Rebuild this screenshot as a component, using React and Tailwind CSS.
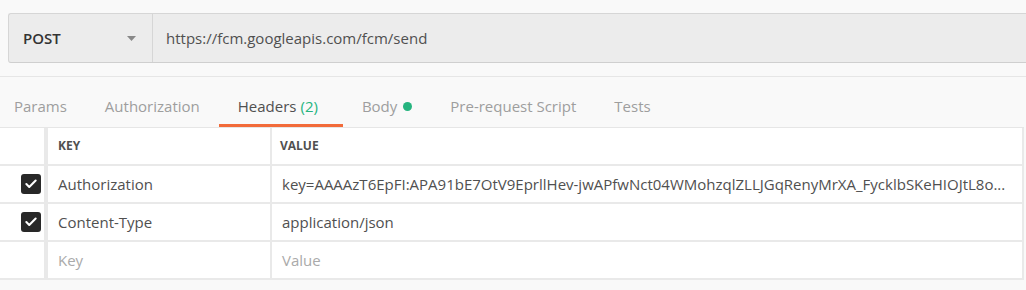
import { Check } from "lucide-react";

const tabs = [
  { label: "Params" },
  { label: "Authorization" },
  { label: "Headers", count: "(2)", active: true },
  { label: "Body", dot: true },
  { label: "Pre-request Script" },
  { label: "Tests" },
];

const rows = [
  {
    key: "Authorization",
    value:
      "key=AAAAzT6EpFI:APA91bE7OtV9EprllHev-jwAPfwNct04WMohzqlZLLJGqRenyMrXA_FycklbSKeHIOJtL8o...",
    checked: true,
  },
  { key: "Content-Type", value: "application/json", checked: true },
];

function Checkbox() {
  return (
    <span className="flex h-5 w-5 items-center justify-center rounded-[3px] bg-[#282828]">
      <Check size={14} strokeWidth={3.5} className="text-white" />
    </span>
  );
}

export default function App() {
  return (
    <div className="h-[290px] w-[1026px] overflow-hidden bg-[#f9f9f9] font-['Open_Sans',sans-serif] text-[15px]">
      <div className="pt-[13px] pl-2">
        <div className="flex h-[50px] w-[1030px] rounded-l-[3px] border border-r-0 border-[#d6d6d6] border-b-[#cfcfcf] bg-[#ececec]">
          <div className="flex w-[144px] items-center justify-between border-r border-[#d6d6d6] pl-[14px] pr-[16px]">
            <span className="font-semibold text-[#333]">POST</span>
            <svg width="9" height="5" viewBox="0 0 9 5">
              <path d="M0 0h9L4.5 5z" fill="#888" />
            </svg>
          </div>
          <div className="flex items-center pl-[13px] text-[#505050]">
            https://fcm.googleapis.com/fcm/send
          </div>
        </div>
      </div>

      <div className="mt-[13px] border-t border-[#e6e6e6]">
        <div className="flex h-[50px] items-center gap-[38px] pl-[14px] pt-[8px]">
          {tabs.map((t) => (
            <div key={t.label} className={`relative flex items-center gap-[6px] ${t.active ? "mr-[6px]" : ""}`}>
              <span className={t.active ? "text-[#505050]" : "text-[#9e9e9e]"}>{t.label}</span>
              {t.count && <span className="-ml-[2px] text-[#26b47f]">{t.count}</span>}
              {t.dot && <span className="h-[9px] w-[9px] rounded-full bg-[#26b47f]" />}
              {t.active && (
                <span className="absolute -bottom-[10px] -left-[19px] -right-[25px] h-[3px] bg-[#f26b3a]" />
              )}
            </div>
          ))}
        </div>
      </div>

      <div className="w-[1024px] border-t border-[#e6e6e6]">
        <div className="flex h-[38px] border-b-2 border-[#e9e9e9] bg-white text-[12px] font-bold text-[#505050]">
          <div className="w-[48px] border-r-[4px] border-[#e9e9e9]" />
          <div className="flex w-[224px] items-center border-r-2 border-[#e9e9e9] pl-[10px]">KEY</div>
          <div className="flex flex-1 items-center border-r-2 border-[#e9e9e9] pl-[8px]">VALUE</div>
        </div>
        {rows.map((r) => (
          <div key={r.key} className="flex h-[38px] border-b-2 border-[#e9e9e9] bg-white text-[#505050]">
            <div className="flex w-[48px] items-center justify-end border-r-[4px] border-[#e9e9e9] pr-[3px]">
              <Checkbox />
            </div>
            <div className="flex w-[224px] items-center border-r-2 border-[#e9e9e9] pl-[10px]">{r.key}</div>
            <div className="flex min-w-0 flex-1 items-center border-r-2 border-[#e9e9e9] pl-[10px] pr-[12px]">
              <span className="truncate">{r.value}</span>
            </div>
          </div>
        ))}
        <div className="flex h-[38px] border-b-2 border-[#e9e9e9] bg-white text-[#aaa]">
          <div className="w-[48px] border-r-[4px] border-[#e9e9e9]" />
          <div className="flex w-[224px] items-center border-r-2 border-[#e9e9e9] pl-[10px]">Key</div>
          <div className="flex flex-1 items-center border-r-2 border-[#e9e9e9] pl-[10px]">Value</div>
        </div>
      </div>
    </div>
  );
}
